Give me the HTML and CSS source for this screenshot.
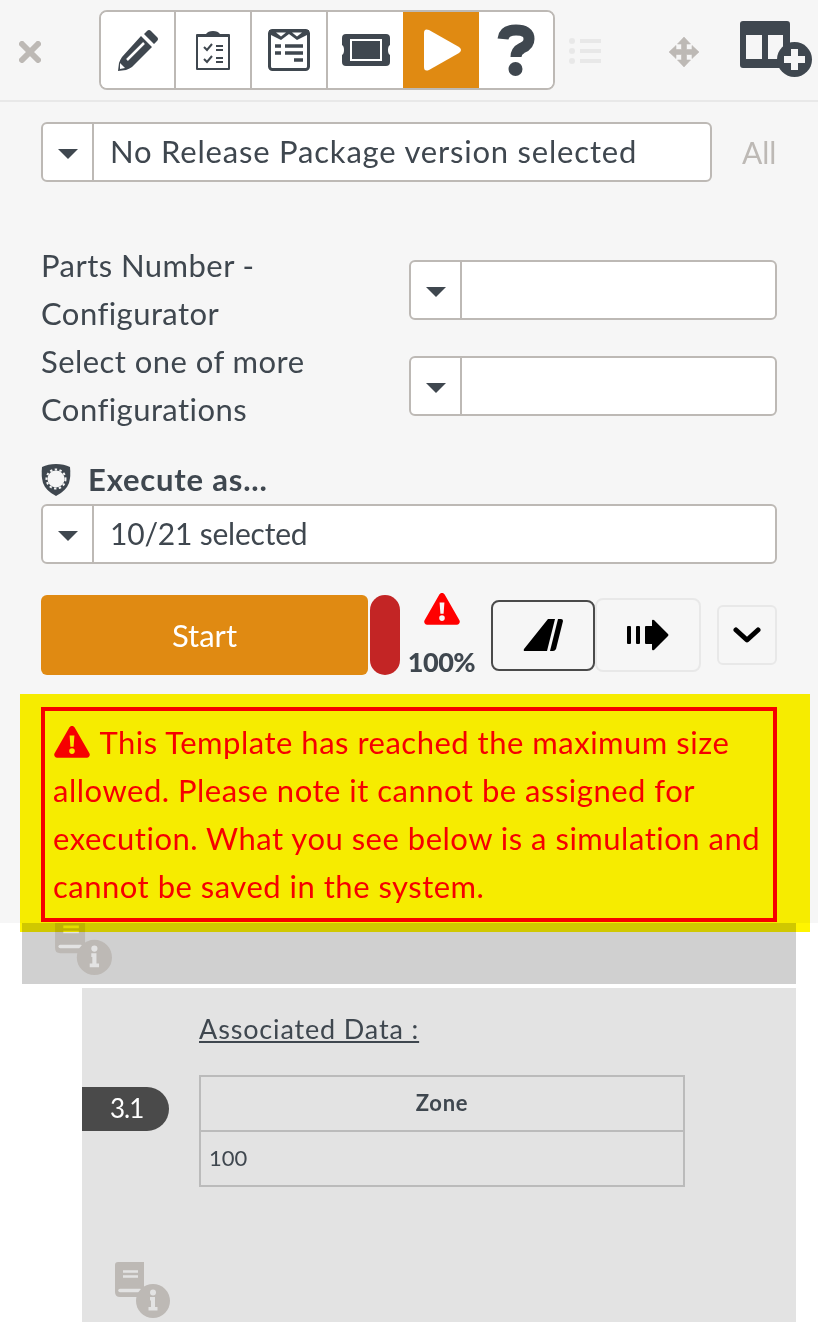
FILE: index.html
```html
<!DOCTYPE html>
<html lang="en">
<head>
<meta charset="utf-8">
<title>Execute</title>
<link rel="stylesheet" href="styles.css">
</head>
<body>
<svg class="defs" width="0" height="0" aria-hidden="true">
  <symbol id="warn" viewBox="0 0 36 32">
    <path fill-rule="evenodd" d="M18 0c1.2 0 2.2.6 2.8 1.7l14.6 25.6c1.1 2-.2 4.4-2.6 4.4H3.2c-2.4 0-3.7-2.4-2.6-4.4L15.2 1.700C15.800.6 16.800 0 18 0zM15.600 9.500l.8 11.200h3.200l.8-11.200zM18 22.300a2.800 2.800 0 1 0 0 5.600 2.800 2.800 0 0 0 0-5.600z"/>
  </symbol>
  <symbol id="docinfo" viewBox="0 0 56 56">
    <path class="doc" d="M4 0h26v35H6q-5 0-5-5V3q0-3 3-3z"/>
    <path class="docline" d="M9 9.500h15M9 14.500h15"/>
    <path class="docstrip" d="M6 28.500h20"/>
    <circle class="doc" cx="39" cy="39" r="17"/>
    <path class="infoi" d="M36 35h5v10h2.500v3.500h-9V45H37v-6.500h-1zM39 27.500a3 3 0 1 1 0 6 3 3 0 0 1 0-6z"/>
  </symbol>
</svg>

<div class="top">
  <header class="bar">
    <svg class="close" viewBox="0 0 22 22"><path d="M3 3l16 16M19 3L3 19"/></svg>
    <nav class="tools">
      <button class="tool" type="button">
        <svg width="42" height="42" viewBox="0 0 42 42"><path class="ink" d="M30 2q2-2 4 0l6 6q2 2 0 4l-3 3-10-10zM24 7l11 11-20 20q-3 2-6 3l-8 1 1-8q1-3 3-6z"/><path class="white-line" d="M27 14 10 31" /><path class="white-fill" d="M3 34l5 5-5 1z"/></svg>
      </button>
      <button class="tool" type="button">
        <svg width="34" height="42" viewBox="0 0 34 42"><path class="ink" d="M1 5h9q2-3 7-3t7 3h9q1 0 1 1v34q0 1-1 1H1q-1 0-1-1V6q0-1 1-1zM2 8v31h30V8z" fill-rule="evenodd"/><path class="ink-line" d="M8 18l3 3 5-6M8 30l3 3 5-6M20 17h7M20 21h7M20 29h7M20 33h7"/></svg>
      </button>
      <button class="tool" type="button">
        <svg width="42" height="42" viewBox="0 0 42 42"><rect class="ink-box" x="1.500" y="1.500" width="39" height="39" rx="3"/><path class="ink" d="M1 1h40v4l-12 6-8-6-8 6L1 5z"/><path class="white-fill" d="M8 3.500h10l-5 4zM24 3.500h10l-5 4z"/><path class="ink-bars" d="M7 17h6M7 24h6M17 17h18M17 24h18M26 31h9"/></svg>
      </button>
      <button class="tool" type="button">
        <svg width="48" height="32" viewBox="0 0 48 32"><path class="ink" d="M4 0h40q4 0 4 4v7q-2 1-2 5t2 5v7q0 4-4 4H4q-4 0-4-4v-7q2-1 2-5t-2-5V4q0-4 4-4z"/><rect class="white-box" x="9" y="6" width="30" height="20"/></svg>
      </button>
      <button class="tool tool-on" type="button">
        <svg width="38" height="42" viewBox="0 0 38 42"><path class="white-fill" d="M0 4q0-5 5-3l30 17q4 3 0 6L5 41q-5 2-5-3z"/></svg>
      </button>
      <button class="tool" type="button">
        <svg width="38" height="52" viewBox="0 0 38 52"><path class="q" d="M6 15q1-9 13-9 13 0 13 9 0 6-7 9-6 3-6 9"/><circle class="qdot" cx="18.500" cy="45" r="7"/></svg>
      </button>
    </nav>
    <svg class="list" viewBox="0 0 32 28"><circle cx="3" cy="4" r="3"/><circle cx="3" cy="14" r="3"/><circle cx="3" cy="24" r="3"/><path d="M11 4h21M11 14h21M11 24h21"/></svg>
    <svg class="move" viewBox="0 0 32 32"><path d="M16 1l6.500 7h-4v5.500H24v-4l7 6.500-7 6.500v-4h-5.500V24h4L16 31l-6.500-7h4v-5.500H8v4L1 16l7-6.500v4h5.500V8h-4z"/></svg>
    <svg class="addtable" viewBox="0 0 72 56"><path class="ink" fill-rule="evenodd" d="M3 0h44q3 0 3 3v41q0 3-3 3H3q-3 0-3-3V3q0-3 3-3zM6 14v24h16V14zM28 14v24h15V14z"/><circle class="ink" cx="54.500" cy="38.500" r="17.500"/><path class="plus" d="M54.500 28v21M44 38.500h21"/></svg>
  </header>

  <main class="main">
    <div class="release">
      <div class="select select-grow">
        <span class="caret-cell"><i class="caret"></i></span>
        <span class="select-text select-release">No Release Package version selected</span>
      </div>
      <span class="all">All</span>
    </div>

    <div class="field field-first">
      <label class="field-label">Parts Number - Configurator</label>
      <div class="select select-grow">
        <span class="caret-cell"><i class="caret"></i></span>
      </div>
    </div>
    <div class="field">
      <label class="field-label">Select one of more Configurations</label>
      <div class="select select-grow">
        <span class="caret-cell"><i class="caret"></i></span>
      </div>
    </div>

    <div class="exec-title">
      <svg width="30" height="32" viewBox="0 0 30 32"><path class="ink" d="M15 0q8 0 14 3 1 9-1 16-3 8-13 13Q5 27 2 19 0 12 1 3q6-3 14-3z"/><circle class="burst" cx="15" cy="15" r="8.500"/><circle class="burst-edge" cx="15" cy="15" r="9.500"/></svg>
      <strong>Execute as...</strong>
    </div>
    <div class="select">
      <span class="caret-cell"><i class="caret"></i></span>
      <span class="select-text select-count">10/21 selected</span>
    </div>

    <div class="actions">
      <button class="start" type="button">Start</button>
      <span class="pill-red"></span>
      <div class="usage">
        <svg class="warn-red" width="36" height="32"><use href="#warn"/></svg>
        <b class="pct">100%</b>
      </div>
      <button class="btn btn-dark" type="button">
        <svg width="40" height="32" viewBox="0 0 40 32"><path d="M25 0h7l-8 32H2q-2 0-1-2zM35 0h3q2 0 2 2l-7 28q-1 2-3 2h-3z"/></svg>
      </button>
      <button class="btn btn-light" type="button">
        <svg width="42" height="32" viewBox="0 0 42 32"><path d="M1 7h2q1 0 1 1v16q0 1-1 1H1q-1 0-1-1V8q0-1 1-1zM10 7h2q1 0 1 1v16q0 1-1 1h-2q-1 0-1-1V8q0-1 1-1zM19 7h6V2q0-2 2-1l14 14q1 1 0 2L27 31q-2 1-2-1v-5h-6q-1 0-1-1V8q0-1 1-1z"/></svg>
      </button>
      <button class="btn btn-more" type="button">
        <svg width="28" height="18" viewBox="0 0 28 18"><path d="M3 4l11 10L25 4"/></svg>
      </button>
    </div>

    <div class="notice">
      <p class="notice-box"><svg class="warn-inline" width="36" height="32"><use href="#warn"/></svg> This Template has reached the maximum size allowed. Please note it cannot be assigned for execution. What you see below is a simulation and cannot be saved in the system.</p>
    </div>
  </main>
</div>

<section class="band">
  <svg class="docinfo docinfo-band" width="58" height="58"><use href="#docinfo"/></svg>
</section>

<section class="step">
  <h3 class="assoc">Associated Data :</h3>
  <div class="step-row">
    <span class="step-num">3.1</span>
    <table class="data">
      <thead><tr><th>Zone</th></tr></thead>
      <tbody><tr><td>100</td></tr></tbody>
    </table>
  </div>
  <svg class="docinfo docinfo-step" width="56" height="56"><use href="#docinfo"/></svg>
</section>
</body>
</html>
```
FILE: styles.css
```css
* { box-sizing: border-box; }
html, body { margin: 0; padding: 0; }
body {
  width: 818px;
  height: 1322px;
  overflow: hidden;
  background: #fff;
  font-family: Lato, "Open Sans", sans-serif;
  color: #3f474f;
}
.defs { position: absolute; }

.top { height: 923px; background: #f6f6f6; }

.bar {
  height: 102px;
  border-bottom: 2px solid #e8e8e8;
  display: flex;
  align-items: flex-start;
}
.close { width: 22px; height: 22px; margin: 41px 0 0 19px; flex: none; }
.close path { stroke: #bdb9b5; stroke-width: 6; stroke-linecap: round; fill: none; }

.tools {
  display: flex;
  margin: 10px 0 0 58px;
  width: 456px;
  height: 80px;
  border: 2px solid #bdb9b5;
  border-radius: 8px;
  background: #fff;
  overflow: hidden;
  flex: none;
}
.tool {
  width: 76px;
  height: 76px;
  padding: 0;
  border: 0;
  border-right: 2px solid #bdb9b5;
  background: #fff;
  display: flex;
  align-items: center;
  justify-content: center;
  flex: none;
}
.tool:first-child { width: 75px; }
.tool:nth-child(4) { width: 75px; border-right: 0; }
.tool:last-child { border-right: 0; width: 74px; }
.tool-on { background: #e08a12; border-right: 0; padding-left: 3px; }

.ink { fill: #3f474f; }
.ink-box { fill: #fff; stroke: #3f474f; stroke-width: 3; }
.ink-line { fill: none; stroke: #3f474f; stroke-width: 2; }
.ink-bars { fill: none; stroke: #3f474f; stroke-width: 3.500; }
.white-fill { fill: #fff; }
.white-box { fill: #3f474f; stroke: #fff; stroke-width: 2; }
.white-line { fill: none; stroke: #fff; stroke-width: 2.500; }
.q { fill: none; stroke: #3f474f; stroke-width: 11; }
.qdot { fill: #3f474f; }

.list { width: 32px; height: 28px; margin: 37px 0 0 14px; flex: none; }
.list circle { fill: #e8e8e8; }
.list path { stroke: #e8e8e8; stroke-width: 4; fill: none; }
.move { width: 32px; height: 32px; margin: 36px 0 0 67px; flex: none; fill: #bdb9b5; stroke: #bdb9b5; stroke-width: .6; stroke-linejoin: round; }
.addtable { width: 72px; height: 56px; margin: 21px 0 0 40px; flex: none; overflow: visible; }
.plus { stroke: #f6f6f6; stroke-width: 7; fill: none; }

.main { padding: 20px 41px 0; }

.select {
  display: flex;
  height: 60px;
  background: #fff;
  border: 2px solid #bdb9b5;
  border-radius: 6px;
  font-size: 31px;
}
.select-grow { flex: 1; }
.caret-cell {
  width: 51px;
  flex: none;
  border-right: 2px solid #bdb9b5;
  display: flex;
  align-items: center;
  justify-content: center;
}
.caret {
  display: block;
  width: 0;
  height: 0;
  margin-top: 3px;
  border-left: 10px solid transparent;
  border-right: 10px solid transparent;
  border-top: 10px solid #3f474f;
}
.select-text { padding-left: 16px; line-height: 54px; white-space: nowrap; }
.select-release { letter-spacing: .8px; }
.select-count { font-size: 30px; letter-spacing: -.2px; }

.release { display: flex; align-items: center; }
.all { margin-left: 30px; width: 35px; font-size: 30px; color: #bdb9b5; }

.field { display: flex; align-items: center; height: 96px; }
.field-first { margin-top: 60px; }
.field-label {
  width: 368px;
  flex: none;
  margin-top: -2px;
  font-size: 31px;
  letter-spacing: .45px;
  line-height: 48px;
  padding-right: 80px;
}

.exec-title {
  display: flex;
  align-items: center;
  gap: 17px;
  height: 48px;
  margin-top: 22px;
  font-size: 31px;
  letter-spacing: .8px;
}
.exec-title strong { margin-top: -2px; }
.burst { fill: #f6f6f6; }
.burst-edge { fill: none; stroke: #f6f6f6; stroke-width: 2; stroke-dasharray: 2.400 2.400; }

.actions { display: flex; align-items: center; height: 80px; margin-top: 31px; }
.start {
  width: 327px;
  height: 80px;
  border: 0;
  border-radius: 6px;
  background: #e08a12;
  color: #fff;
  font: 31px Lato, sans-serif;
  flex: none;
}
.pill-red { width: 30px; height: 80px; margin-left: 2px; border-radius: 15px; background: #c32525; flex: none; }
.usage {
  width: 67px;
  height: 80px;
  margin-left: 8px;
  flex: none;
  display: flex;
  flex-direction: column;
  align-items: center;
  justify-content: space-between;
  font-size: 27px;
  line-height: 30px;
  white-space: nowrap;
}
.pct { font-weight: 900; margin-bottom: -2px; letter-spacing: -.5px; }
.warn-red { fill: #f00; margin-top: -2px; }
.btn { padding: 0; background: none; display: flex; align-items: center; justify-content: center; flex: none; }
.btn-dark { width: 104px; height: 71px; margin-left: 16px; border: 2px solid #4a4a4a; border-radius: 8px; }
.btn-light { width: 106px; height: 74px; border: 2px solid #e8e8e8; border-radius: 8px; }
.btn-more { width: 60px; height: 60px; margin-left: 16px; border: 2px solid #e8e8e8; border-radius: 6px; }
.btn-more path { fill: none; stroke: #000; stroke-width: 5; stroke-linecap: round; stroke-linejoin: round; }

.notice {
  position: relative;
  margin: 19px -33px -9px -21px;
  padding: 13px 33px 10px 21px;
  background: #fff500;
  mix-blend-mode: multiply;
}
.notice-box {
  margin: 0;
  height: 215px;
  padding: 7px 8px 8px;
  border: 4px solid #f00;
  color: #f00;
  font-size: 31px;
  letter-spacing: .5px;
  line-height: 48px;
}
.warn-inline { fill: #f00; vertical-align: -4px; margin-right: 2px; margin-left: 1px; }

.band {
  height: 61px;
  margin: 0 22px;
  padding-left: 32px;
  background: #d0d0d0;
  overflow: hidden;
}
.docinfo { display: block; }
.docinfo-band { margin-top: -6px; }
.doc { fill: #bdb9b5; }
.docline { fill: none; stroke: #e3e3e3; stroke-width: 2.500; }
.docstrip { fill: none; stroke: #e3e3e3; stroke-width: 3.500; stroke-linecap: round; }
.infoi { fill: #e3e3e3; }

.step {
  height: 334px;
  margin: 4px 22px 0 82px;
  padding-top: 25px;
  background: #e3e3e3;
}
.assoc {
  margin: 0 0 30px 117px;
  font-size: 27px;
  font-weight: 400;
  letter-spacing: .85px;
  line-height: 32px;
  text-decoration: underline;
}
.step-row { display: flex; align-items: flex-start; }
.step-num {
  width: 87px;
  height: 44px;
  margin-top: 12px;
  padding-left: 28px;
  border-radius: 0 22px 22px 0;
  background: #4a4a4a;
  color: #fff;
  font-size: 26px;
  letter-spacing: -1px;
  line-height: 42px;
  flex: none;
}
.data { width: 486px; margin-left: 30px; border-collapse: collapse; font-size: 22px; }
.data th, .data td { border: 2px solid #bbb; padding: 0 8px 3px; }
.data th { height: 55px; font-weight: 700; letter-spacing: .7px; }
.data td { height: 55px; }
.docinfo-step { margin: 75px 0 0 32px; }
```
